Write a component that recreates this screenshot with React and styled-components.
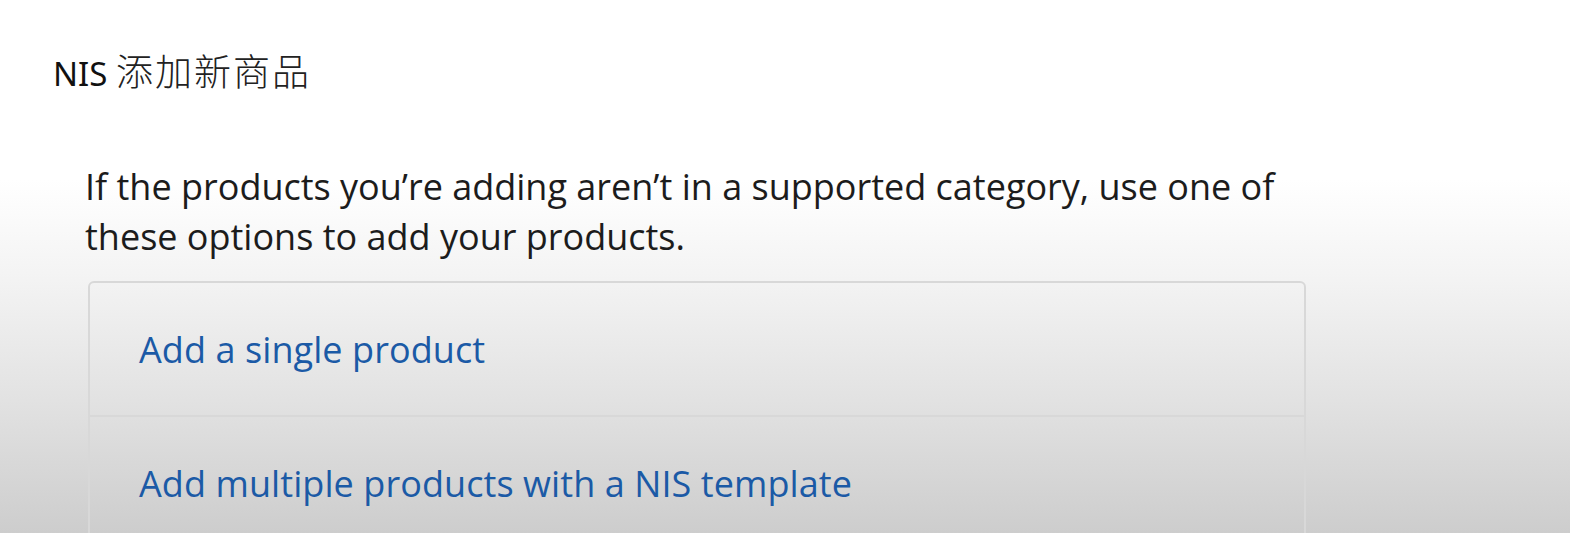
import React from "react";
import styled, { createGlobalStyle } from "styled-components";

const Global = createGlobalStyle`
  html, body { margin: 0; padding: 0; }
  body {
    width: 1570px;
    height: 533px;
    overflow: hidden;
    background: linear-gradient(to bottom, #ffffff 0px, #ffffff 180px, #f3f3f3 280px, #e2e2e2 400px, #cdcdcd 533px);
    font-family: "Open Sans", "Noto Sans CJK SC", sans-serif;
  }
`;

const Page = styled.div`
  height: 533px;
  display: flex;
  flex-direction: column;
`;

const Title = styled.h1`
  margin: 0;
  padding: 48px 0 0 53px;
  font-family: "Noto Sans", "Noto Sans CJK SC", sans-serif;
  font-weight: 400;
  font-size: 33px;
  line-height: 44px;
  color: #111;
`;

const TitleCJK = styled.span`
  font-family: "Noto Sans CJK SC", sans-serif;
  font-size: 37px;
  font-weight: 300;
  letter-spacing: 2px;
  color: #222;
`;

const Section = styled.section`
  padding: 66px 0 0 85px;
  width: 1230px;
`;

const Lead = styled.p`
  margin: 0;
  font-size: 36px;
  line-height: 50px;
  color: #1c1c1c;
  letter-spacing: 0;
`;

const OptionList = styled.div`
  margin: 19px 0 0 3px;
  width: 1214px;
  border: 2px solid #d8d8d8;
  border-radius: 6px;
  display: flex;
  flex-direction: column;
`;

const Option = styled.a`
  display: flex;
  align-items: center;
  height: 132px;
  padding-left: 49px;
  font-size: 36px;
  color: #1b5aa6;
  text-decoration: none;
  letter-spacing: 0.08px;
  & + & {
    border-top: 2px solid #d8d8d8;
  }
`;

export default function App() {
  return (
    <Page>
      <Global />
      <Title>
        NIS <TitleCJK>添加新商品</TitleCJK>
      </Title>
      <Section>
        <Lead>
          If the products you’re adding aren’t in a supported category, use one of these options to add your products.
        </Lead>
        <OptionList>
          <Option href="#">Add a single product</Option>
          <Option href="#">Add multiple products with a NIS template</Option>
        </OptionList>
      </Section>
    </Page>
  );
}
